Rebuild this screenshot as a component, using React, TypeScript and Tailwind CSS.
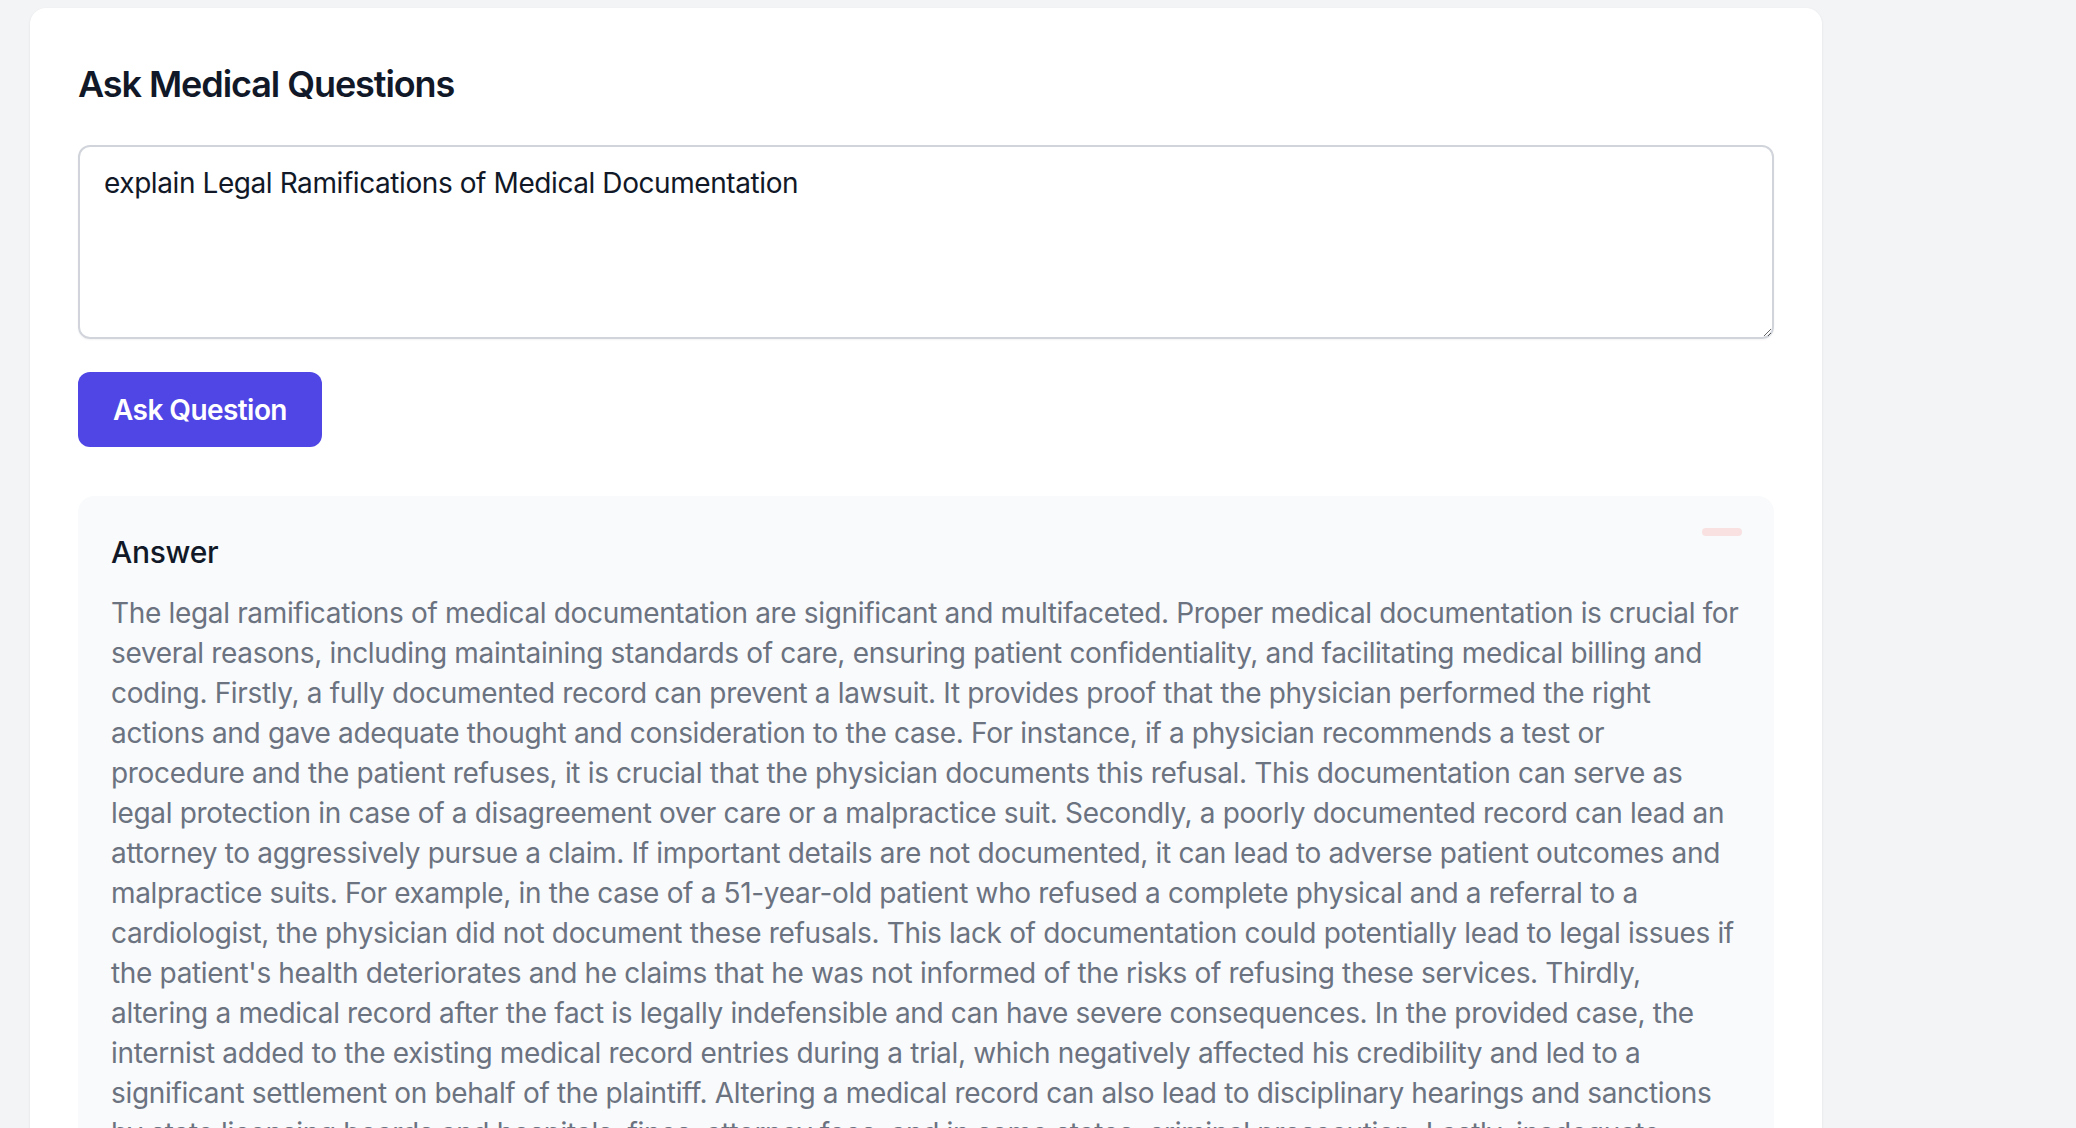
const answer =
  "The legal ramifications of medical documentation are significant and multifaceted. Proper medical documentation is crucial for several reasons, including maintaining standards of care, ensuring patient confidentiality, and facilitating medical billing and coding. Firstly, a fully documented record can prevent a lawsuit. It provides proof that the physician performed the right actions and gave adequate thought and consideration to the case. For instance, if a physician recommends a test or procedure and the patient refuses, it is crucial that the physician documents this refusal. This documentation can serve as legal protection in case of a disagreement over care or a malpractice suit. Secondly, a poorly documented record can lead an attorney to aggressively pursue a claim. If important details are not documented, it can lead to adverse patient outcomes and malpractice suits. For example, in the case of a 51-year-old patient who refused a complete physical and a referral to a cardiologist, the physician did not document these refusals. This lack of documentation could potentially lead to legal issues if the patient's health deteriorates and he claims that he was not informed of the risks of refusing these services. Thirdly, altering a medical record after the fact is legally indefensible and can have severe consequences. In the provided case, the internist added to the existing medical record entries during a trial, which negatively affected his credibility and led to a significant settlement on behalf of the plaintiff. Altering a medical record can also lead to disciplinary hearings and sanctions by state licensing boards and hospitals, fines, attorney fees, and in some states, criminal prosecution. Lastly, inadequate documentation can make it difficult to defend the care that was provided, even when that care met the accepted standard.";

export default function App() {
  return (
    <div className="min-h-screen bg-[#f3f4f6] font-['Inter',sans-serif]">
      <div className="pl-[30px] pt-[8px]">
        <div className="w-[1792px] bg-white rounded-[16px] shadow-[0_1px_3px_rgba(0,0,0,0.08)] p-[48px]">
          <h1 className="text-[36px] leading-[56px] font-semibold tracking-[-0.03em] text-[#111827]">Ask Medical Questions</h1>

          <textarea
            className="mt-[33px] block w-full h-[194px] border-2 border-[#d1d5db] rounded-[12px] px-[24px] py-[16px] text-[28px] leading-[40px] tracking-[-0.015em] text-[#111827] shadow-[0_1px_2px_rgba(0,0,0,0.05)] resize-y outline-none"
            defaultValue="explain Legal Ramifications of Medical Documentation"
          />

          <button className="mt-[33px] h-[75px] px-[35px] bg-[#4f46e5] text-white text-[28px] font-semibold tracking-[-0.02em] rounded-[12px]">
            Ask Question
          </button>

          <div className="mt-[49px] bg-[#f9fafb] rounded-[16px] pl-[33px] pr-[32px] pt-[32px] pb-[40px]">
            <div className="flex justify-between items-start">
              <h2 className="text-[30px] leading-[48px] font-medium tracking-[-0.01em] text-[#111827]">Answer</h2>
              <span className="block w-[40px] h-[8px] rounded-full bg-[#f9e1e2]"></span>
            </div>
            <p className="mt-[17px] text-[28px] leading-[40px] tracking-[-0.012em] text-[#6b7280]">{answer}</p>
          </div>
        </div>
      </div>
    </div>
  );
}
